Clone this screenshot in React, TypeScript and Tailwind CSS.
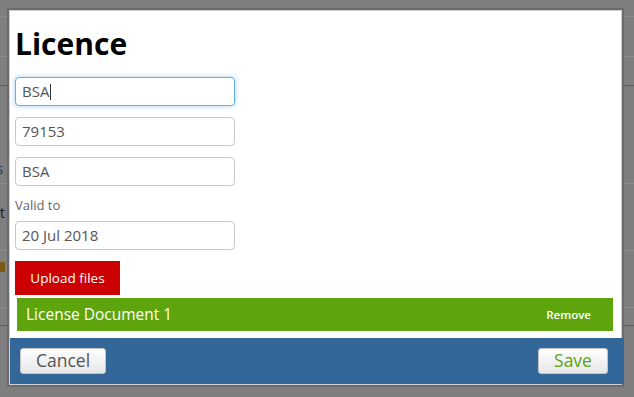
import React from "react";

function Field({ value, focused }: { value: string; focused?: boolean }) {
  return (
    <div
      className={
        "flex h-[29px] w-[220px] items-center rounded-[4px] border bg-white px-[6px] text-[15px] text-[#555] " +
        (focused
          ? "border-[#66afe9] shadow-[0_0_5px_rgba(102,175,233,0.6)]"
          : "border-[#c8c8c8]")
      }
    >
      <span>{value}</span>
      {focused && <span className="ml-[1px] inline-block h-[16px] w-px bg-[#333]" />}
    </div>
  );
}

export default function App() {
  return (
    <div className="relative h-[397px] w-[634px] overflow-hidden bg-[#7f7f7f] font-['Open_Sans',sans-serif]">
      {/* faint page behind overlay */}
      <div className="absolute left-0 right-0 top-[16px] h-px bg-[#8a8a8a]" />
      <div className="absolute left-0 right-0 top-[56px] h-px bg-[#8c8c8c]" />
      <div className="absolute left-0 right-0 top-[85px] h-px bg-[#5c5c5c]" />
      <div className="absolute left-0 right-0 top-[183px] h-px bg-[#8c8c8c]" />
      <div className="absolute left-0 right-0 top-[250px] h-px bg-[#8c8c8c]" />
      <div className="absolute left-0 right-0 top-[307px] h-px bg-[#8c8c8c]" />
      <div className="absolute left-0 right-0 top-[325px] h-px bg-[#5c5c5c]" />
      <div className="absolute left-[-4px] top-[158px] text-[15px] leading-[20px] text-[#1c3a5a]">s</div>
      <div className="absolute left-[-4px] top-[202px] text-[15px] leading-[20px] text-[#222]">it</div>
      <div className="absolute left-0 top-[262px] h-[10px] w-[5px] bg-[#7a5a10]" />

      {/* modal */}
      <div className="absolute left-[9px] top-[10px] flex w-[613px] flex-col border border-[#d0d0d0] bg-white shadow-[0_0_0_2px_#6b6b6b]">
        <div className="flex flex-col items-start pl-[5px] pr-[7px] pt-[13px] pb-[7px]">
          <h1 className="text-[30px] font-bold leading-[40px] text-black">Licence</h1>
          <div className="mt-[13px] flex flex-col gap-[11px]">
            <Field value="BSA" focused />
            <Field value="79153" />
            <Field value="BSA" />
          </div>
          <div className="mt-[10px] text-[13px] leading-[18px] text-[#666]">Valid to</div>
          <div className="mt-[7px]">
            <Field value="20 Jul 2018" />
          </div>
          <button className="mt-[11px] h-[34px] w-[105px] bg-[#cc0000] text-[13.5px] text-white">
            Upload files
          </button>
          <div className="ml-[2px] mt-[3px] flex h-[33px] w-[596px] items-center justify-between bg-[#5ea40d] pl-[9px] pr-[22px] text-white">
            <span className="text-[15.5px]">License Document 1</span>
            <span className="text-[11.5px] font-semibold">Remove</span>
          </div>
        </div>
        <div className="-mr-[3px] flex h-[46px] items-center justify-between bg-[#336799] pl-[10px] pr-[16px]">
          <button className="h-[26px] w-[86px] rounded-[3px] border border-[#c4c4c4] bg-gradient-to-b from-white to-[#e6e6e6] text-[17.5px] leading-none text-[#555]">
            Cancel
          </button>
          <button className="h-[26px] w-[70px] rounded-[3px] border border-[#c4c4c4] bg-gradient-to-b from-white to-[#e6e6e6] text-[17.5px] leading-none text-[#5ea40d]">
            Save
          </button>
        </div>
      </div>
    </div>
  );
}
